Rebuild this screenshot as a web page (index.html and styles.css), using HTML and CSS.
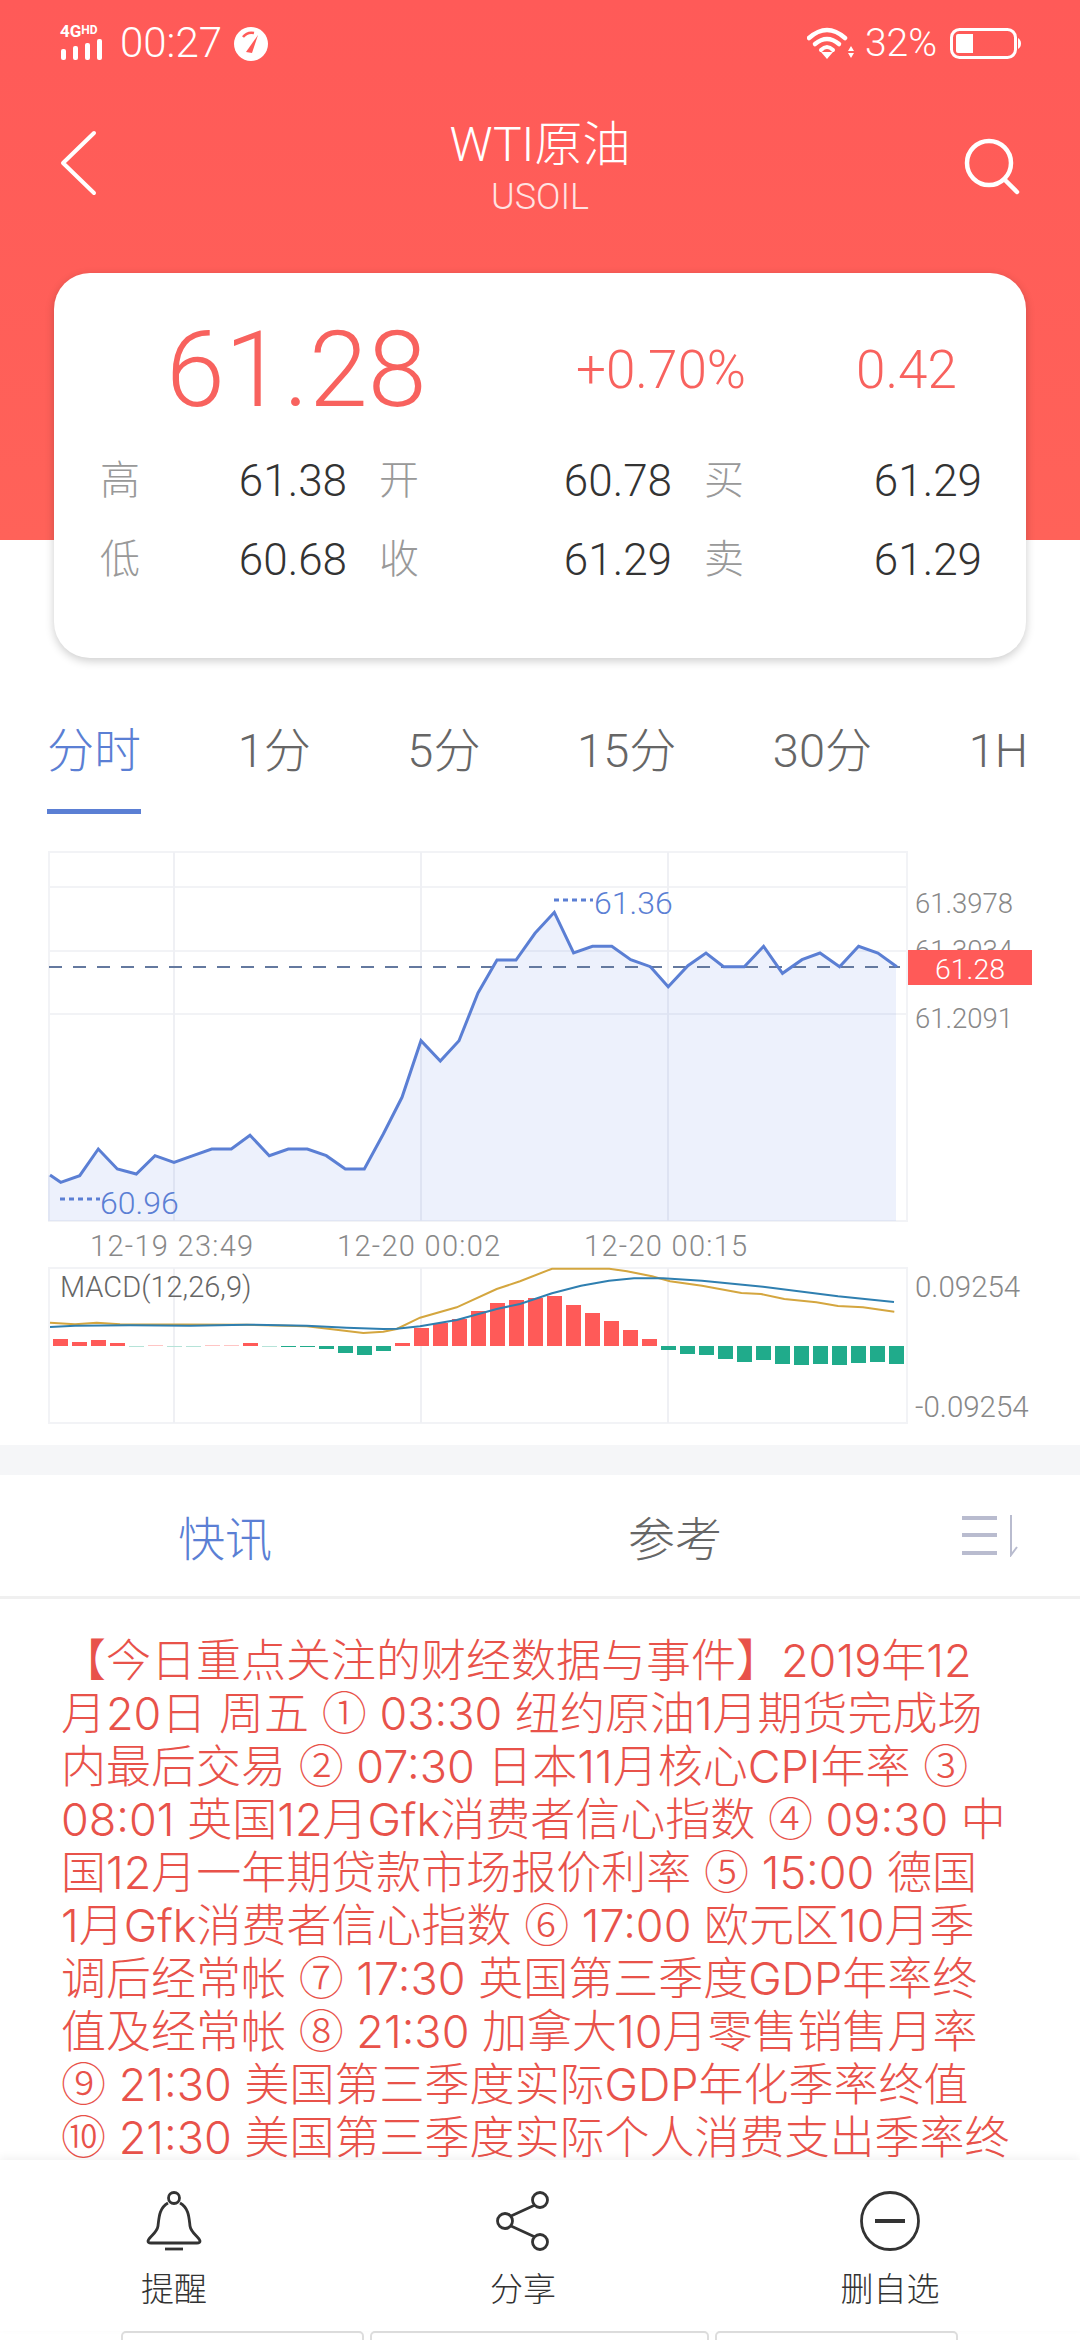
FILE: index.html
```html
<!DOCTYPE html>
<html lang="zh-CN">
  <head>
    <meta charset="UTF-8" />
    <title>WTI原油</title>
    <link rel="stylesheet" href="styles.css">
  </head>
  <body>
    <header class="top">
      <div class="status">
        <div class="status-left">
          <div class="net">
            <span class="net-label">4G<small>HD</small></span>
            <svg width="44" height="21" viewBox="0 0 44 21">
              <rect x="1" y="10" width="5" height="11" rx="2" fill="#fff" />
              <rect x="13" y="7" width="5" height="14" rx="2" fill="#fff" />
              <rect x="25" y="4" width="5" height="17" rx="2" fill="#fff" />
              <rect x="37" y="0" width="5" height="21" rx="2" fill="#fff" />
            </svg>
          </div>
          <span class="clock">00:27</span>
          <svg class="gauge" width="34" height="34" viewBox="0 0 34 34">
            <circle cx="17" cy="17" r="17" fill="#fff" />
            <path d="M12 25 L24 8 L18 26 Z" fill="#ff5b59" />
            <path d="M9 10 A11 11 0 0 1 20 6" fill="none" stroke="#ff5b59" stroke-width="2.5" />
          </svg>
        </div>
        <div class="status-right">
          <svg width="48" height="33" viewBox="0 0 48 33">
            <path d="M2 11 Q20 -5 38 11" fill="none" stroke="#fff" stroke-width="4.5" stroke-linecap="round" />
            <path d="M8 17 Q20 7 32 17" fill="none" stroke="#fff" stroke-width="4.5" stroke-linecap="round" />
            <path d="M14 23 Q20 17 26 23" fill="none" stroke="#fff" stroke-width="4" stroke-linecap="round" />
            <path d="M14 25 H26 L20 32 Z" fill="#fff" />
            <path d="M44 19 L47 24 H41 Z M41 26 H47 L44 31 Z" fill="#fff" />
          </svg>
          <span class="percent">32%</span>
          <svg width="71" height="31" viewBox="0 0 71 31">
            <rect x="1.5" y="1.5" width="64" height="28" rx="8" fill="none" stroke="#fff" stroke-width="3" />
            <path d="M6 8 Q6 6 8 6 H23 V25 H8 Q6 25 6 23 Z" fill="#fff" />
            <path d="M68 10 Q71 12 71 15.500 Q71 19 68 21 Z" fill="#fff" />
          </svg>
        </div>
      </div>
      <div class="nav">
        <svg class="nav-icon" width="60" height="70" viewBox="0 0 60 70">
          <path d="M34 4 L3 34 L34 64" fill="none" stroke="#fff" stroke-width="4" stroke-linecap="round" stroke-linejoin="round" />
        </svg>
        <div class="nav-title">
          <h1>WTI原油</h1>
          <p>USOIL</p>
        </div>
        <svg class="nav-icon search" width="60" height="70" viewBox="0 0 60 70">
          <circle cx="29" cy="30" r="22" fill="none" stroke="#fff" stroke-width="4.500" />
          <path d="M45 47 L57 59" stroke="#fff" stroke-width="4.500" stroke-linecap="round" />
        </svg>
      </div>
    </header>

    <section class="card">
      <div class="quote">
        <span class="price">61.28</span>
        <span class="change">+0.70%</span>
        <span class="change">0.42</span>
      </div>
      <div class="stats">
        <div class="stat"><span>高</span><b>61.38</b></div>
        <div class="stat"><span>开</span><b>60.78</b></div>
        <div class="stat"><span>买</span><b>61.29</b></div>
        <div class="stat"><span>低</span><b>60.68</b></div>
        <div class="stat"><span>收</span><b>61.29</b></div>
        <div class="stat"><span>卖</span><b>61.29</b></div>
      </div>
    </section>

    <nav class="periods">
      <a class="active" href="#">分时</a>
      <a href="#">1分</a>
      <a href="#">5分</a>
      <a href="#">15分</a>
      <a href="#">30分</a>
      <a href="#">1H</a>
    </nav>

    <svg class="chart" width="1080" height="606" viewBox="0 840 1080 606">
      <!-- price panel -->
      <rect class="grid" x="49" y="853" width="858" height="369" />
      <path class="grid" d="M49 888 H907 M49 952 H907 M49 1015 H907" />
      <path class="grid-v" d="M174 853 V1222 M421 853 V1222 M668 853 V1222" />
      <polygon class="area" points="48,1176 60.700,1183.300 79.700,1176.700 98.300,1150 117.300,1170 136.300,1175 155,1156.700 174,1163.300 193,1156.700 211.700,1150 231.300,1150 250,1136.300 269.300,1156.700 288.300,1150 307.300,1150 326.300,1156.700 345.300,1170 364.300,1170 383.300,1135 402,1098.300 421,1041.700 440.300,1062 459,1041.700 478,994 497,961 516,961 535,934.300 554.300,913.300 573.600,954 592.500,947.300 611.800,947.300 630.700,960.700 650.400,967.700 668.200,987.700 687.900,966.700 706,954 723.600,967.700 744.300,967.700 763.600,947.300 782.500,974.300 802,960.700 820,954 839.600,967.700 858.600,947.300 877.900,954 896,967.700 896,1222 48,1222" />
      <path class="last-line" d="M49 968 H900" />
      <polyline class="price-line" points="50,1176 60.700,1183.300 79.700,1176.700 98.300,1150 117.300,1170 136.300,1175 155,1156.700 174,1163.300 193,1156.700 211.700,1150 231.300,1150 250,1136.300 269.300,1156.700 288.300,1150 307.300,1150 326.300,1156.700 345.300,1170 364.300,1170 383.300,1135 402,1098.300 421,1041.700 440.300,1062 459,1041.700 478,994 497,961 516,961 535,934.300 554.300,913.300 573.600,954 592.500,947.300 611.800,947.300 630.700,960.700 650.400,967.700 668.200,987.700 687.900,966.700 706,954 723.600,967.700 744.300,967.700 763.600,947.300 782.500,974.300 802,960.700 820,954 839.600,967.700 858.600,947.300 877.900,954 896.800,967.700" />
      <path class="mark-dots" d="M554 901 H593 M60 1200 H100" />
      <text class="mark" x="594" y="915">61.36</text>
      <text class="mark" x="100" y="1215">60.96</text>
      <text class="axis" x="915" y="914">61.3978</text>
      <text class="axis" x="915" y="961">61.3034</text>
      <text class="axis" x="915" y="1029">61.2091</text>
      <rect class="last-box" x="908" y="951" width="124" height="35" />
      <text class="last-text" x="970" y="980">61.28</text>
      <text class="axis date" x="90" y="1257">12-19 23:49</text>
      <text class="axis date" x="337" y="1257">12-20 00:02</text>
      <text class="axis date" x="584" y="1257">12-20 00:15</text>

      <!-- macd panel -->
      <rect class="grid" x="49" y="1269" width="858" height="155" />
      <path class="grid-v" d="M174 1269 V1424 M421 1269 V1424 M668 1269 V1424" />
      <g class="up">
        <rect x="53" y="1340" width="15" height="7" />
        <rect x="72" y="1343" width="15" height="4" />
        <rect x="91" y="1341" width="15" height="6" />
        <rect x="110" y="1344" width="15" height="3" />
        <rect x="243" y="1344" width="15" height="3" />
        <rect x="395" y="1344" width="15" height="3" />
        <rect x="414" y="1329" width="15" height="18" />
        <rect x="433" y="1324" width="15" height="23" />
        <rect x="452" y="1320" width="15" height="27" />
        <rect x="471" y="1312" width="15" height="35" />
        <rect x="490" y="1304" width="15" height="43" />
        <rect x="509" y="1301" width="15" height="46" />
        <rect x="528" y="1299" width="15" height="48" />
        <rect x="547" y="1297" width="15" height="50" />
        <rect x="566" y="1306" width="15" height="41" />
        <rect x="585" y="1314" width="15" height="33" />
        <rect x="604" y="1322" width="15" height="25" />
        <rect x="623" y="1331" width="15" height="16" />
        <rect x="642" y="1340" width="15" height="7" />
      </g>
      <g class="faint-up">
        <rect x="148" y="1346" width="15" height="1" />
        <rect x="205" y="1346" width="15" height="1" />
        <rect x="224" y="1346" width="15" height="1" />
      </g>
      <g class="faint-down">
        <rect x="129" y="1347" width="15" height="1" />
        <rect x="167" y="1347" width="15" height="1" />
        <rect x="186" y="1347" width="15" height="1" />
        <rect x="262" y="1347" width="15" height="1" />
      </g>
      <g class="down">
        <rect x="281" y="1347" width="15" height="1" />
        <rect x="300" y="1347" width="15" height="1" />
        <rect x="319" y="1347" width="15" height="3" />
        <rect x="338" y="1347" width="15" height="7" />
        <rect x="357" y="1347" width="15" height="9" />
        <rect x="376" y="1347" width="15" height="5" />
        <rect x="661" y="1347" width="15" height="4" />
        <rect x="680" y="1347" width="15" height="8" />
        <rect x="699" y="1347" width="15" height="9" />
        <rect x="718" y="1347" width="15" height="13" />
        <rect x="737" y="1347" width="15" height="16" />
        <rect x="756" y="1347" width="15" height="14" />
        <rect x="775" y="1347" width="15" height="18" />
        <rect x="794" y="1347" width="15" height="19" />
        <rect x="813" y="1347" width="15" height="18" />
        <rect x="832" y="1347" width="15" height="19" />
        <rect x="851" y="1347" width="15" height="17" />
        <rect x="870" y="1347" width="15" height="16" />
        <rect x="889" y="1347" width="15" height="18" />
      </g>
      <polyline class="dea" points="50,1323.700 75,1325.300 96.700,1323.700 120,1325.300 246.700,1325.700 306.700,1327.300 330,1330 363.300,1334 383.300,1332.700 396.700,1330 420,1318.700 456.700,1308.300 496.700,1290 520,1282.300 552,1269.700 609.300,1269.700 627,1272.300 652,1277.300 670,1282.300 702,1286.700 741.400,1294 761,1295 784.300,1300 816.400,1303.300 838,1307 863,1308.300 894.300,1312.700" />
      <polyline class="dif" points="50,1328 75,1326.700 130,1326.300 190,1326.700 246.700,1325.700 306.700,1326.700 346.700,1328.700 383.300,1330 396.700,1329.700 420,1327.300 456.700,1321 496.700,1310 520,1305 552,1294.300 581,1286.700 609,1281.700 634,1279.300 663,1279.300 702,1281.700 763,1287.700 838,1297.300 894,1303" />
      <text class="macd-name" x="60" y="1298">MACD(12,26,9)</text>
      <text class="axis macd-axis" x="915" y="1298">0.09254</text>
      <text class="axis macd-axis" x="915" y="1418">-0.09254</text>
    </svg>

    <div class="news-tabs">
      <a class="active" href="#">快讯</a>
      <a href="#">参考</a>
      <svg width="58" height="42" viewBox="0 0 58 42">
        <path d="M0 3 H35 M0 20 H35 M0 38 H35" stroke="#b9bccf" stroke-width="4" fill="none" />
        <path d="M49 0 V40 L55 32" stroke="#b9bccf" stroke-width="2" fill="none" />
      </svg>
    </div>

    <article class="news">【今日重点关注的财经数据与事件】2019年12<br>月20日 周五 <i>①</i> 03:30 纽约原油1月期货完成场<br>内最后交易 <i>②</i> 07:30 日本11月核心CPI年率 <i>③</i><br>08:01 英国12月Gfk消费者信心指数 <i>④</i> 09:30 中<br>国12月一年期贷款市场报价利率 <i>⑤</i> 15:00 德国<br>1月Gfk消费者信心指数 <i>⑥</i> 17:00 欧元区10月季<br>调后经常帐 <i>⑦</i> 17:30 英国第三季度GDP年率终<br>值及经常帐 <i>⑧</i> 21:30 加拿大10月零售销售月率<br><i>⑨</i> 21:30 美国第三季度实际GDP年化季率终值<br><i>⑩</i> 21:30 美国第三季度实际个人消费支出季率终</article>

    <footer class="actions">
      <div class="action">
        <svg width="60" height="60" viewBox="0 0 60 60">
          <circle cx="30" cy="7" r="5.500" />
          <path d="M24 12 C15 17 15 27 14 35 C13 42 5 46 4 50 Q4 52 7 52 H53 Q56 52 56 50 C55 46 47 42 46 35 C45 27 45 17 36 12" />
          <path d="M21 58 H39" />
        </svg>
        <span>提醒</span>
      </div>
      <div class="action">
        <svg width="60" height="60" viewBox="0 0 60 60">
          <circle cx="47" cy="9" r="7.500" />
          <circle cx="12" cy="30" r="7.500" />
          <circle cx="47" cy="51" r="7.500" />
          <path d="M18 25 L42 14 M18 35 L42 46" />
        </svg>
        <span>分享</span>
      </div>
      <div class="action">
        <svg width="60" height="60" viewBox="0 0 60 60">
          <circle cx="30" cy="30" r="28.500" />
          <path class="minus" d="M15 30 H45" />
        </svg>
        <span>删自选</span>
      </div>
    </footer>
    <div class="cut-row">
      <div class="cut-box one"></div>
      <div class="cut-box two"></div>
      <div class="cut-box three"></div>
    </div>
  </body>
</html>
```

FILE: styles.css
```css
body {
  margin: 0;
  width: 1080px;
  height: 2340px;
  overflow: hidden;
  background: #fff;
  font-family: Roboto, "Noto Sans CJK SC", sans-serif;
  font-weight: 300;
  color: #333;
}

a {
  text-decoration: none;
  color: #666;
}

.top {
  height: 540px;
  background: linear-gradient(#ff5a58, #ff6259);
  color: #fff;
  box-sizing: border-box;
  padding: 23px 60px 0;
}

.status {
  display: flex;
  justify-content: space-between;
  align-items: flex-start;
  height: 36px;
}

.status-left,
.status-right {
  display: flex;
  align-items: center;
}

.net {
  display: flex;
  flex-direction: column;
  width: 46px;
  gap: 1px;
}

.net-label {
  font-size: 17px;
  font-weight: 700;
  line-height: 13px;
  white-space: nowrap;
}

.net-label small {
  font-size: 12px;
  vertical-align: 3px;
}

.clock {
  font-size: 42px;
  line-height: 36px;
  margin: 2px 0 0 14px;
}

.gauge {
  margin: 3px 0 0 12px;
}

.status-right {
  margin-top: 2px;
  margin-right: -1px;
}

.percent {
  font-size: 39px;
  line-height: 36px;
  margin: 0 13px 0 10px;
}

.nav {
  display: flex;
  justify-content: space-between;
  align-items: flex-start;
  margin-top: 56px;
}

.nav-icon {
  margin-top: 14px;
}

.nav-icon.search {
  margin-top: 18px;
}

.nav-title {
  text-align: center;
}

.nav-title h1 {
  margin: 0;
  font-size: 48px;
  font-weight: 300;
  line-height: 60px;
}

.nav-title p {
  margin: 2px 0 0;
  font-size: 36px;
  line-height: 40px;
  color: #ffe3e2;
}

.card {
  height: 385px;
  box-sizing: border-box;
  margin: -267px 54px 0;
  padding: 35px 46px 0;
  background: #fff;
  border-radius: 36px;
  box-shadow: 0 3px 10px rgba(0, 0, 0, 0.2);
  position: relative;
}

.quote {
  display: grid;
  grid-template-columns: 410px 280px auto;
  margin-left: 66px;
  align-items: center;
  height: 120px;
  color: #f8625e;
}

.price {
  font-size: 106px;
}

.change {
  font-size: 53px;
}

.stats {
  display: grid;
  grid-template-columns: 247px 293px 278px;
  column-gap: 32px;
  row-gap: 27px;
  margin-top: 27px;
}

.stat {
  display: flex;
  justify-content: space-between;
  line-height: 52px;
}

.stat span {
  font-size: 40px;
  color: #999;
}

.stat b {
  font-size: 44px;
  font-weight: 300;
  color: #333;
}

.periods {
  display: flex;
  justify-content: space-between;
  align-items: flex-start;
  margin-top: 65px;
  padding: 0 52px 0 47px;
  font-size: 47px;
  line-height: 56px;
}

.periods a {
  padding-bottom: 30px;
}

.periods a.active {
  color: #5b7fd4;
  border-bottom: 5px solid #5b7fd4;
}

.chart {
  display: block;
  margin-top: 25px;
}

.grid {
  fill: none;
  stroke: #f2f3f6;
  stroke-width: 2;
}

.grid-v {
  fill: none;
  stroke: #eff0f4;
  stroke-width: 2;
}

.area {
  fill: #4b73e1;
  fill-opacity: 0.1;
}

.last-line {
  fill: none;
  stroke: #64799f;
  stroke-width: 2;
  stroke-dasharray: 13 11;
}

.price-line {
  fill: none;
  stroke: #5b7fd4;
  stroke-width: 3;
}

.mark-dots {
  fill: none;
  stroke: #5b7fd4;
  stroke-width: 3;
  stroke-dasharray: 5 4;
}

.mark {
  font-size: 32px;
  fill: #5b7fd4;
}

.axis {
  font-size: 27.500px;
  fill: #888;
}

.axis.date {
  font-size: 29px;
  letter-spacing: 1.300px;
}

.axis.macd-axis {
  font-size: 29.500px;
}

.last-box {
  fill: #ff5a58;
}

.last-text {
  font-size: 28.500px;
  fill: #fff;
  text-anchor: middle;
}

.up rect {
  fill: #ff5a58;
}

.down rect {
  fill: #20ab8b;
}

.faint-up rect {
  fill: #ffc5c4;
}

.faint-down rect {
  fill: #b5e3d8;
}

.dea {
  fill: none;
  stroke: #d4a63f;
  stroke-width: 2;
}

.dif {
  fill: none;
  stroke: #2f7fb0;
  stroke-width: 2;
}

.macd-name {
  font-size: 29px;
  fill: #666;
}

.news-tabs {
  box-sizing: border-box;
  padding: 0 60px 0 178px;
  border-top: 30px solid #f5f6f8;
  border-bottom: 3px solid #f0f0f0;
  height: 154px;
  display: flex;
  align-items: center;
  font-size: 47px;
}

.news-tabs a.active {
  color: #5b7fd4;
}

.news-tabs a + a {
  margin-left: 356px;
}

.news-tabs svg {
  margin-left: auto;
}

.news {
  height: 561px;
  box-sizing: border-box;
  padding: 35px 0 0 61px;
  overflow: hidden;
  white-space: nowrap;
  font-family: Inter, "Noto Sans CJK SC", sans-serif;
  font-size: 45px;
  line-height: 53px;
  color: #e8524a;
}

.news i {
  font-family: "Noto Sans CJK SC", sans-serif;
  font-style: normal;
  line-height: 0;
}

.actions {
  display: grid;
  grid-template-columns: 348px 350px 384px;
  height: 171px;
  box-sizing: border-box;
  padding-top: 31px;
  background: #fff;
  box-shadow: 0 -3px 8px rgba(0, 0, 0, 0.05);
  position: relative;
}

.action {
  display: flex;
  flex-direction: column;
  align-items: center;
  gap: 17px;
  font-size: 33px;
  line-height: 44px;
}

.action svg {
  fill: none;
  stroke: #333;
  stroke-width: 2.800;
}

.action .minus {
  stroke-width: 4;
}

.cut-row {
  display: flex;
  gap: 6px;
  padding-left: 121px;
}

.cut-box {
  height: 20px;
  box-sizing: border-box;
  border: 2px solid #ddd;
  border-radius: 5px 5px 0 0;
}

.cut-box.one {
  width: 243px;
}

.cut-box.two {
  width: 339px;
}

.cut-box.three {
  width: 243px;
}
```
